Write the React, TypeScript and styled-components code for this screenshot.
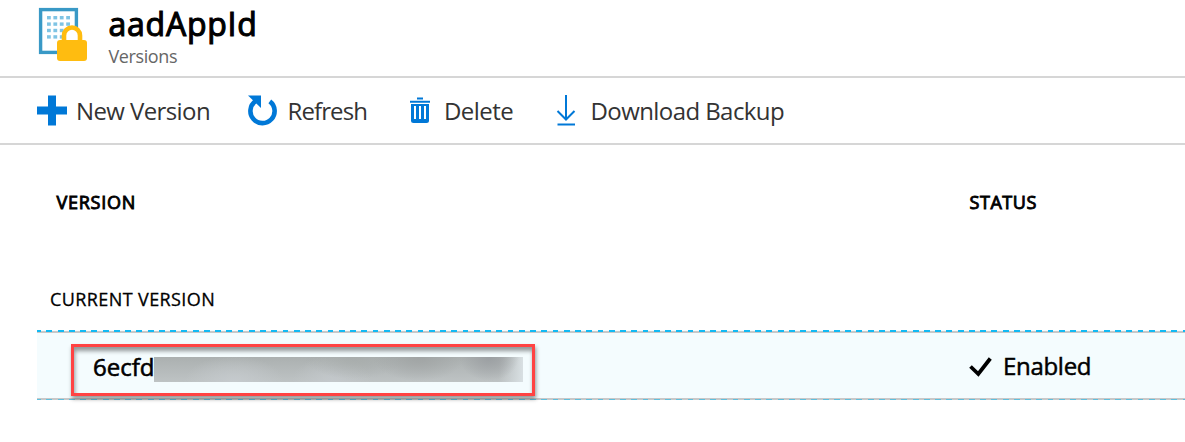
import React from 'react';
import styled, { createGlobalStyle } from 'styled-components';

const Global = createGlobalStyle`
  * { box-sizing: border-box; }
  body { margin: 0; background: #fff; font-family: 'Open Sans', 'Noto Sans', sans-serif; color: #000; }
`;

const Page = styled.div`
  height: 442px;
  overflow: hidden;
  background: #fff;
`;

const Label = styled.span<{ $size: number; $line: number; $bold?: number; $track?: number; $color?: string }>`
  display: block;
  margin: 0;
  white-space: nowrap;
  font-size: ${p => p.$size}px;
  line-height: ${p => p.$line}px;
  font-weight: 400;
  -webkit-text-stroke: ${p => p.$bold ?? 0}px currentColor;
  letter-spacing: ${p => p.$track ?? 0}px;
  color: ${p => p.$color ?? '#000'};
`;

const Header = styled.header`
  display: flex;
  height: 78px;
  padding: 6px 0 0 37px;
  border-bottom: 2px solid #d6d6d6;
`;

const Titles = styled.div`
  padding-left: 17.5px;
`;

const Toolbar = styled.nav`
  display: flex;
  height: 67px;
  border-bottom: 2px solid #d6d6d6;
  padding-left: 36px;
`;

const Command = styled.div<{ $width: number; $gap: number }>`
  display: flex;
  align-items: center;
  width: ${p => p.$width}px;
  gap: ${p => p.$gap}px;
  svg { flex: none; }
`;

const HeadRow = styled.div`
  display: grid;
  grid-template-columns: 913px 1fr;
  padding: 44px 0 0 56.5px;
`;

const Group = styled.div`
  padding: 74px 0 0 50px;
  height: 115px;
`;

const Row = styled.div`
  display: grid;
  grid-template-columns: 932px 1fr;
  height: 70px;
  margin-left: 37px;
  background:
    repeating-linear-gradient(90deg, #12b9f3 0 4px, transparent 4px 9.3px, #12b9f3 9.3px 11.25px) 0 0 / 100% 2px no-repeat,
    linear-gradient(#c8c8c8, #c8c8c8) 0 1px / 100% 2px no-repeat,
    repeating-linear-gradient(90deg, #5fbfdd 0 4px, transparent 4px 9.3px, #5fbfdd 9.3px 11.25px) 0 100% / 100% 1px no-repeat,
    linear-gradient(#c8c8c8, #c8c8c8) 0 100% / 100% 2px no-repeat,
    #f4fcfe;
`;

const Outline = styled.div`
  display: flex;
  width: 464px;
  height: 52px;
  margin: 14px 0 0 34px;
  padding: 10px 0 0 19px;
  border: 3px solid #ff4343;
  box-shadow: 1px 3px 4px rgba(0, 0, 0, 0.4), inset 1px 4px 4px rgba(0, 0, 0, 0.4);
`;

const Prefix = styled.div`
  flex: none;
  width: 61px;
`;

const Redacted = styled.div`
  width: 369px;
  height: 25px;
  background:
    radial-gradient(30px 24px at 335px 0, #9b9fa2, transparent),
    radial-gradient(46px 24px at 265px 0, #a0a4a4, transparent),
    radial-gradient(50px 22px at 200px 0, #a8adac, transparent),
    radial-gradient(50px 26px at 80px 25px, #c5cacd, transparent),
    radial-gradient(40px 26px at 178px 25px, #c3c8cb, transparent),
    linear-gradient(90deg, transparent 345px, #d9e0e3 369px),
    linear-gradient(#abb0b0, #bec3c4);
`;

const Status = styled.div`
  display: flex;
  padding-top: 20px;
  gap: 11px;
  svg { margin-top: 6px; }
`;

const blue = '#0078d7';
const dots = [0, 1, 2, 3];

const SecretIcon = () => (
  <svg width="54" height="58" viewBox="37 6 54 58">
    <rect x="40.6" y="9.6" width="35.8" height="42.8" fill="#fff" stroke="#3999c6" strokeWidth="3.4" />
    {dots.map(r => dots.map(c => (
      <rect key={`${r}${c}`} x={47 + c * 6.4} y={16 + r * 6.4} width="3.8" height="3.4" fill="#7fc4e4" />
    )))}
    <path d="M64 41V35.500a8 8 0 0 1 16 0v5.500" fill="#fff" stroke="#ffbc10" strokeWidth="4.600" />
    <rect x="57" y="40" width="30" height="21" rx="3" fill="#ffbc10" />
  </svg>
);

const PlusIcon = () => (
  <svg width="32" height="32" viewBox="36 94 32 32" fill={blue}>
    <path d="M48 94.500h8v11h11v8H56v11h-8v-11H37v-8h11z" />
  </svg>
);

const RefreshIcon = () => (
  <svg width="32" height="32" viewBox="246 94 32 32">
    <path d="M269.800 100.400A12.100 12.100 0 1 1 255.500 100.200" fill="none" stroke={blue} strokeWidth="4.600" />
    <path d="M248 94.500h13v12.500z" fill={blue} />
  </svg>
);

const TrashIcon = () => (
  <svg width="22" height="30" viewBox="409 96 22 30">
    <path d="M417 98.500h6M410 101.700h20" stroke={blue} strokeWidth="2" fill="none" />
    <path d="M411 104h18v16.500q0 2.500-2.500 2.500h-13q-2.500 0-2.500-2.500z" fill={blue} />
    <path d="M415 106v13M420 106v13M425 106v13" stroke="#fff" strokeWidth="2" />
  </svg>
);

const DownloadIcon = () => (
  <svg width="22" height="32" viewBox="555 94 22 32" fill="none" stroke={blue} strokeWidth="2">
    <path d="M566 94v24.500M557.500 110l8.500 8.500 8.500-8.500M557.500 123.500h17.500" />
  </svg>
);

const CheckIcon = () => (
  <svg width="23" height="22" viewBox="969 357 23 22">
    <path d="M970.500 367.500l7.800 7.500 12-15.500" fill="none" stroke="#000" strokeWidth="3.800" />
  </svg>
);

export default function App() {
  return (
    <Page>
      <Global />
      <Header>
        <SecretIcon />
        <Titles>
          <Label as="h1" $size={32} $line={35} $bold={1.1} $track={0.75}>aadAppId</Label>
          <Label $size={18} $line={30} $track={-0.4} $color="#666">Versions</Label>
        </Titles>
      </Header>
      <Toolbar>
        <Command $width={210} $gap={8}><PlusIcon /><Label $size={24} $line={32} $track={-0.6} $color="#333">New Version</Label></Command>
        <Command $width={163} $gap={9.5}><RefreshIcon /><Label $size={24} $line={32} $track={-0.9} $color="#333">Refresh</Label></Command>
        <Command $width={146} $gap={13}><TrashIcon /><Label $size={24} $line={32} $track={-0.55} $color="#333">Delete</Label></Command>
        <Command $width={240} $gap={13.5}><DownloadIcon /><Label $size={24} $line={32} $track={-0.58} $color="#333">Download Backup</Label></Command>
      </Toolbar>
      <HeadRow>
        <Label $size={18} $line={26} $bold={0.9} $track={0.75}>VERSION</Label>
        <Label $size={18} $line={26} $bold={0.9} $track={0.55}>STATUS</Label>
      </HeadRow>
      <Group>
        <Label $size={18} $line={20} $bold={0.3} $track={0.4}>CURRENT VERSION</Label>
      </Group>
      <Row>
        <Outline>
          <Prefix><Label $size={24} $line={19} $bold={0.6}>6ecfd</Label></Prefix>
          <Redacted />
        </Outline>
        <Status>
          <CheckIcon />
          <Label $size={24} $line={32} $bold={0.5} $track={-0.3}>Enabled</Label>
        </Status>
      </Row>
    </Page>
  );
}
